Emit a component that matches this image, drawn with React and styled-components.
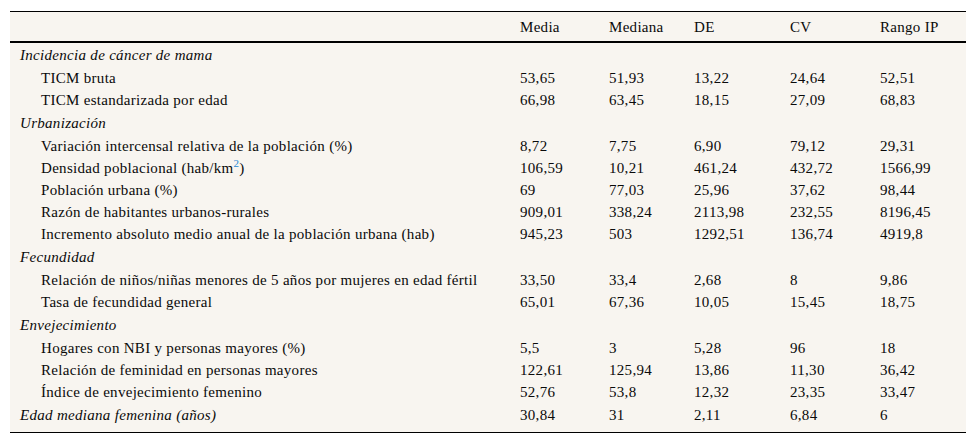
import React from "react";
import styled, { createGlobalStyle } from "styled-components";

const Global = createGlobalStyle`
  html, body { margin: 0; padding: 0; background: #ffffff; }
  body { font-family: "Liberation Serif", "Times New Roman", serif; color: #000; }
`;

const Page = styled.div`
  padding: 11px 11px 0 10px;
`;

const Table = styled.table`
  width: 956px;
  border-collapse: collapse;
  table-layout: fixed;
  background: #f8f5f0;
  font-family: "Liberation Serif", "Times New Roman", serif;
  font-size: 15px;
  letter-spacing: 0.3px;
  line-height: 20px;
  color: #0a0a0a;
  border-top: 1px solid #000;
  border-bottom: 1px solid #000;
`;

const HeadCell = styled.th`
  font-family: inherit;
  font-size: inherit;
  font-weight: normal;
  text-align: left;
  padding: 5px 0 4px 10px;
  height: 20px;
  border-bottom: 2px solid #000;
  white-space: nowrap;
`;

const Cell = styled.td`
  font-family: inherit;
  font-size: inherit;
  text-align: left;
  white-space: nowrap;
  padding: ${(p) => (p.$cat ? "2px" : "1px")} 0
    ${(p) => (p.$last ? "7px" : p.$cat ? "2px" : "1px")}
    ${(p) => (p.$indent ? "31px" : "10px")};
  font-style: ${(p) => (p.$italic ? "italic" : "normal")};
`;

const Sup = styled.sup`
  color: #2a8ad4;
  font-size: 11px;
  line-height: 0;
`;

const cols = [500, 89, 85, 96, 90, 96];

const rows = [
  { cat: "Incidencia de cáncer de mama" },
  { label: "TICM bruta", v: ["53,65", "51,93", "13,22", "24,64", "52,51"] },
  { label: "TICM estandarizada por edad", v: ["66,98", "63,45", "18,15", "27,09", "68,83"] },
  { cat: "Urbanización" },
  { label: "Variación intercensal relativa de la población (%)", v: ["8,72", "7,75", "6,90", "79,12", "29,31"] },
  { label: "density", v: ["106,59", "10,21", "461,24", "432,72", "1566,99"] },
  { label: "Población urbana (%)", v: ["69", "77,03", "25,96", "37,62", "98,44"] },
  { label: "Razón de habitantes urbanos-rurales", v: ["909,01", "338,24", "2113,98", "232,55", "8196,45"] },
  { label: "Incremento absoluto medio anual de la población urbana (hab)", v: ["945,23", "503", "1292,51", "136,74", "4919,8"] },
  { cat: "Fecundidad" },
  { label: "Relación de niños/niñas menores de 5 años por mujeres en edad fértil", v: ["33,50", "33,4", "2,68", "8", "9,86"] },
  { label: "Tasa de fecundidad general", v: ["65,01", "67,36", "10,05", "15,45", "18,75"] },
  { cat: "Envejecimiento" },
  { label: "Hogares con NBI y personas mayores (%)", v: ["5,5", "3", "5,28", "96", "18"] },
  { label: "Relación de feminidad en personas mayores", v: ["122,61", "125,94", "13,86", "11,30", "36,42"] },
  { label: "Índice de envejecimiento femenino", v: ["52,76", "53,8", "12,32", "23,35", "33,47"] },
  { cat: "Edad mediana femenina (años)", v: ["30,84", "31", "2,11", "6,84", "6"], last: true },
];

export default function App() {
  return (
    <Page>
      <Global />
      <Table>
        <colgroup>
          {cols.map((w, i) => (
            <col key={i} style={{ width: w }} />
          ))}
        </colgroup>
        <thead>
          <tr>
            <HeadCell />
            <HeadCell>Media</HeadCell>
            <HeadCell>Mediana</HeadCell>
            <HeadCell>DE</HeadCell>
            <HeadCell>CV</HeadCell>
            <HeadCell>Rango IP</HeadCell>
          </tr>
        </thead>
        <tbody>
          {rows.map((r, i) => {
            const isCat = !!r.cat;
            const vals = r.v || ["", "", "", "", ""];
            return (
              <tr key={i}>
                <Cell $cat={isCat} $last={r.last} $italic={isCat} $indent={!isCat}>
                  {isCat ? (
                    r.cat
                  ) : r.label === "density" ? (
                    <>
                      Densidad poblacional (hab/km<Sup>2</Sup>)
                    </>
                  ) : (
                    r.label
                  )}
                </Cell>
                {vals.map((v, j) => (
                  <Cell key={j} $cat={isCat} $last={r.last}>
                    {v}
                  </Cell>
                ))}
              </tr>
            );
          })}
        </tbody>
      </Table>
    </Page>
  );
}
